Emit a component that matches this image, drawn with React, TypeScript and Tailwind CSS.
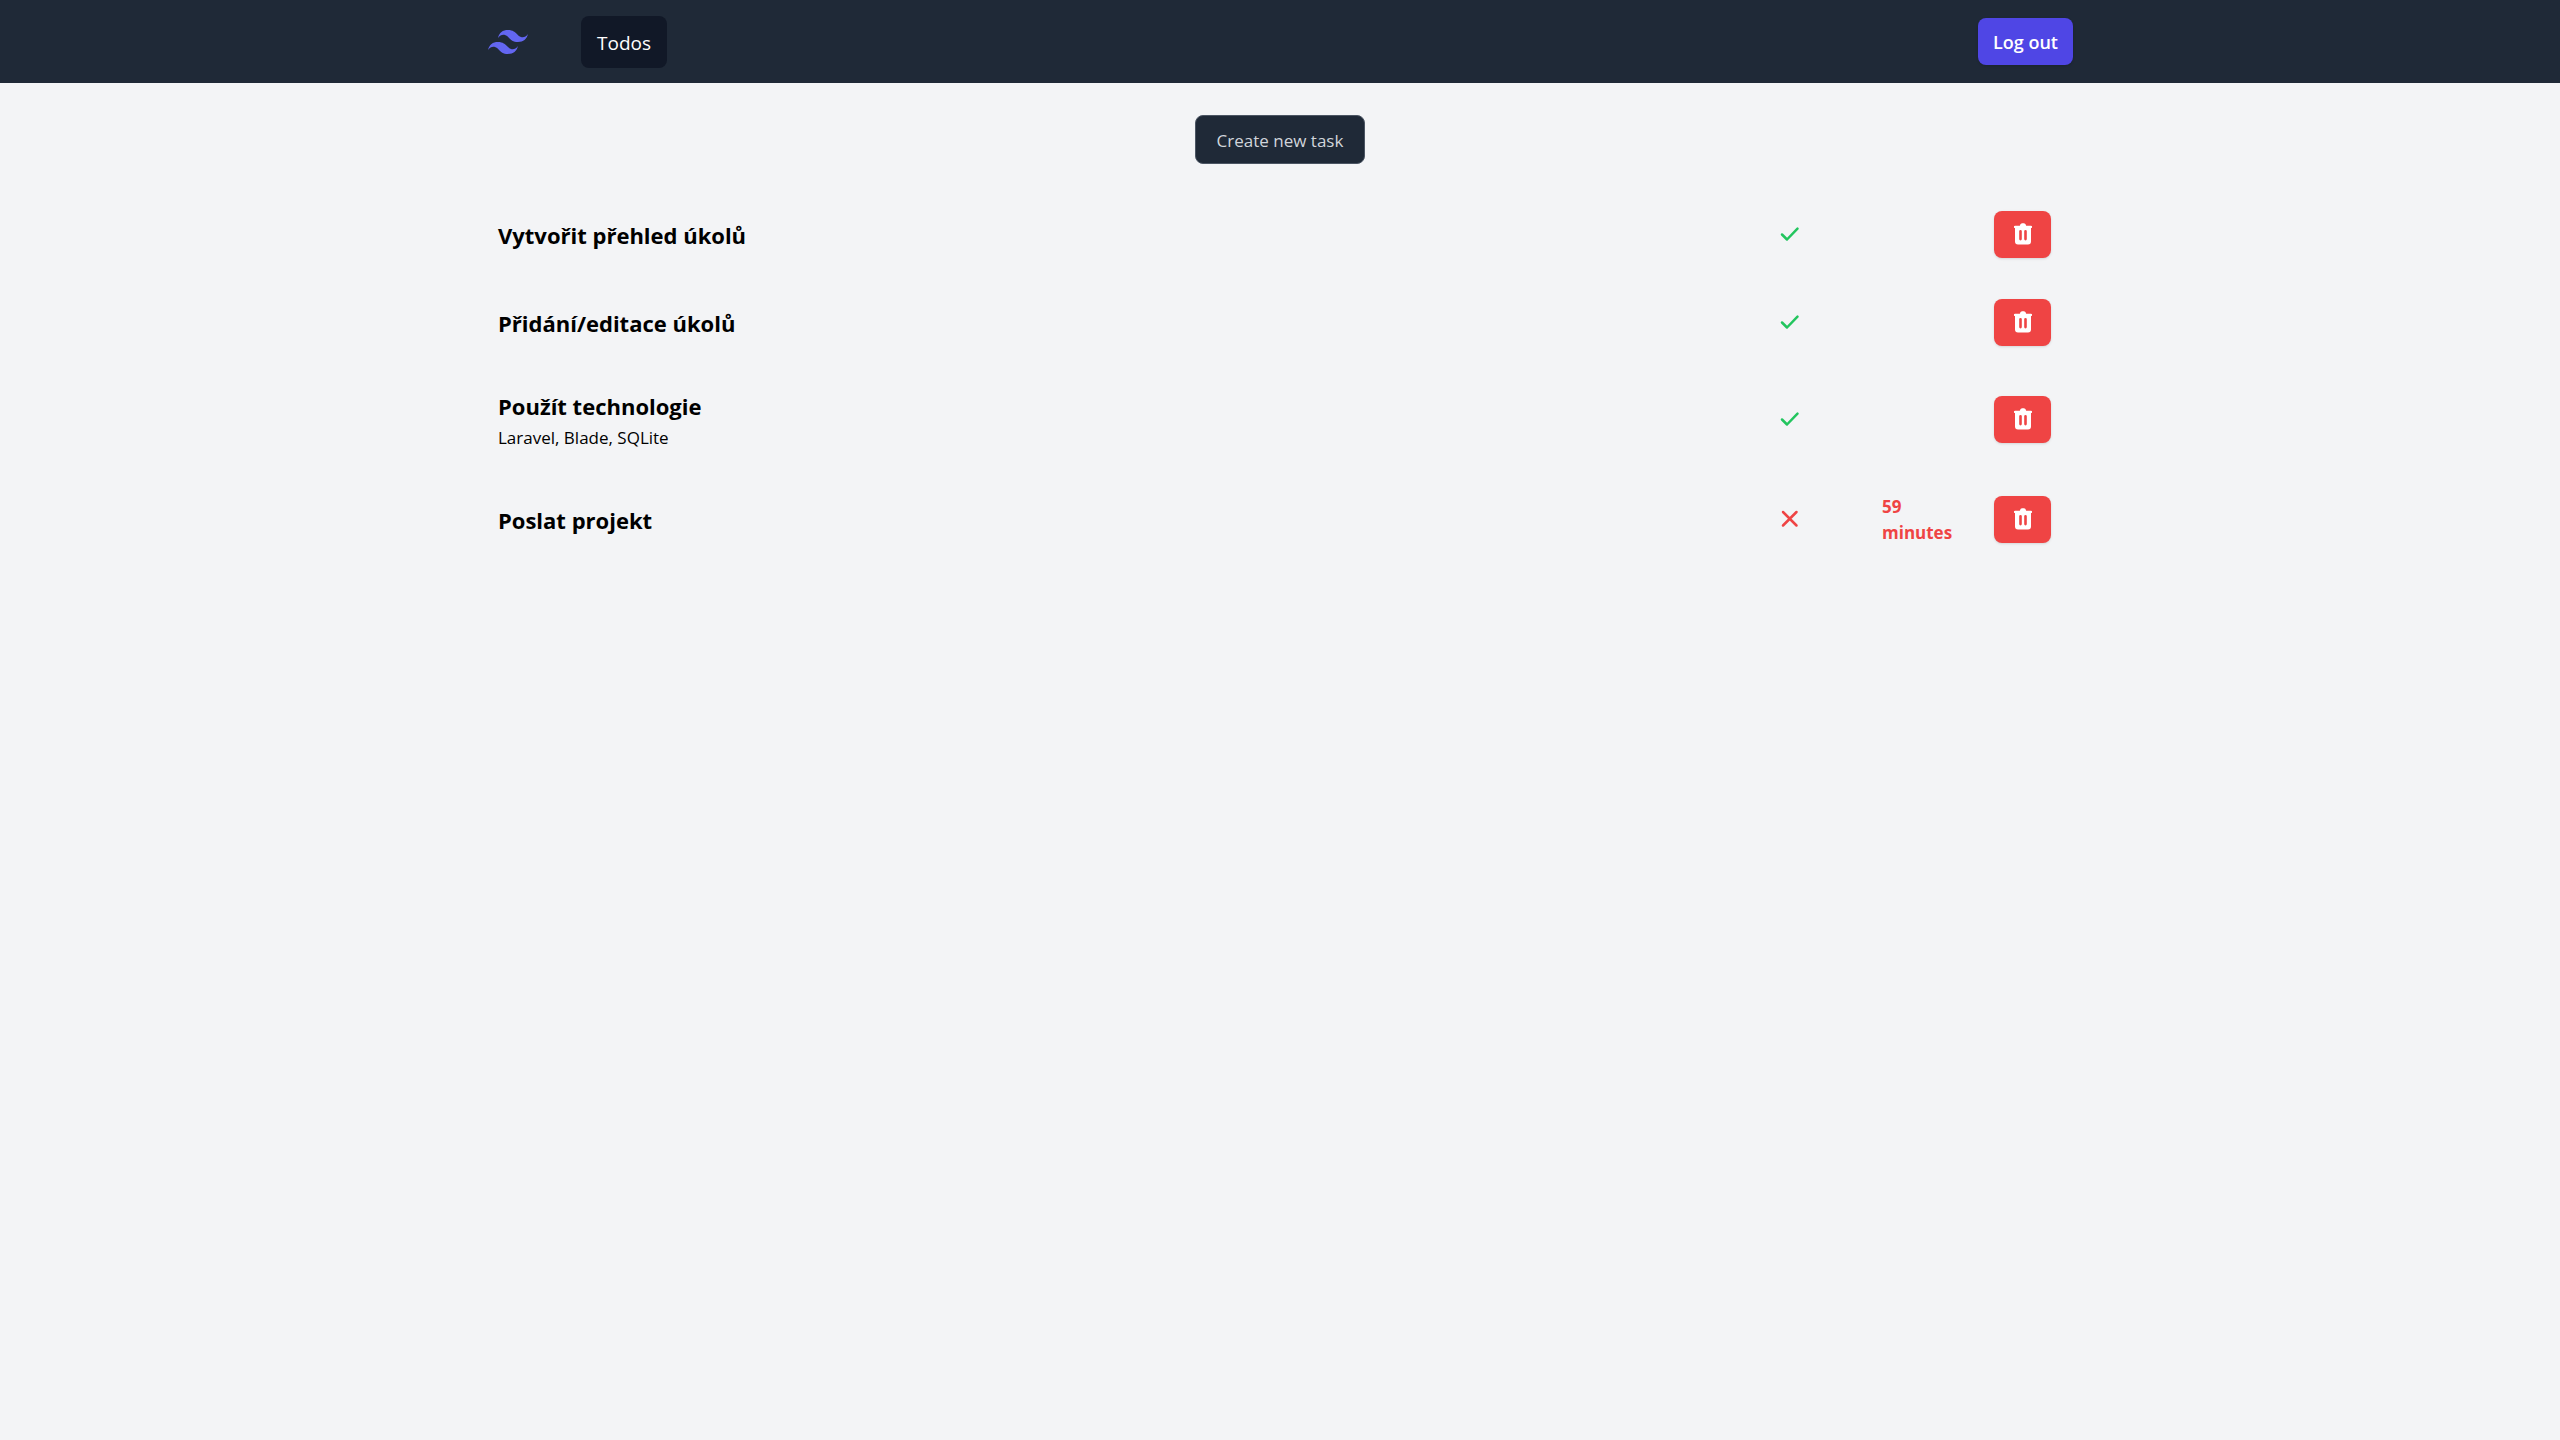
import React from "react";

type Task = { title: string; note?: string; done: boolean; due?: string };

const tasks: Task[] = [
  { title: "Vytvořit přehled úkolů", done: true },
  { title: "Přidání/editace úkolů", done: true },
  { title: "Použít technologie", note: "Laravel, Blade, SQLite", done: true },
  { title: "Poslat projekt", done: false, due: "59 minutes" },
];

function Logo() {
  return (
    <svg viewBox="0 0 54 33" className="mt-0.5 w-10 fill-[#6366f1]" aria-hidden="true">
      <path
        fillRule="evenodd"
        d="M27 0c-7.2 0-11.7 3.6-13.5 10.8 2.7-3.6 5.85-4.95 9.45-4.05 2.054.513 3.522 2.004 5.147 3.653C30.744 13.09 33.808 16.2 40.5 16.2c7.2 0 11.7-3.6 13.5-10.8-2.7 3.6-5.85 4.95-9.45 4.05-2.054-.513-3.522-2.004-5.147-3.653C36.756 3.11 33.692 0 27 0zM13.5 16.2C6.3 16.2 1.8 19.8 0 27c2.7-3.6 5.85-4.95 9.45-4.05 2.054.514 3.522 2.004 5.147 3.653C17.244 29.29 20.308 32.4 27 32.4c7.2 0 11.7-3.6 13.5-10.8-2.7 3.6-5.85 4.95-9.45 4.05-2.054-.513-3.522-2.004-5.147-3.653C23.256 19.31 20.192 16.2 13.5 16.2z"
      />
    </svg>
  );
}

function TrashIcon() {
  return (
    <svg viewBox="0 0 18 22" className="h-[22px] w-[18px] fill-white" aria-hidden="true">
      <path
        fillRule="evenodd"
        d="M5.800 2.800Q6.200 0.300 8 0.300h2Q11.800 0.300 12.200 2.800H17a1.100 1.100 0 0 1 0 2.200V18.500a3 3 0 0 1-3 3H4a3 3 0 0 1-3-3V5a1.100 1.100 0 0 1 0-2.200ZM5.200 8.300v7.800a1.300 1.300 0 0 0 2.600 0V8.300a1.300 1.300 0 0 0-2.600 0Zm5 0v7.800a1.300 1.300 0 0 0 2.600 0V8.300a1.300 1.300 0 0 0-2.600 0Z"
      />
    </svg>
  );
}

function StatusIcon({ done }: { done: boolean }) {
  return done ? (
    <svg viewBox="0 0 20 20" className="size-5 fill-none stroke-[#22c55e] stroke-[2.5px]" role="img" aria-label="Done">
      <path strokeLinecap="round" strokeLinejoin="round" d="M2 10.500l5 5L17.500 4.700" />
    </svg>
  ) : (
    <svg viewBox="0 0 20 20" className="size-5 fill-none stroke-[#ef4444] stroke-[2.5px]" role="img" aria-label="Not done">
      <path strokeLinecap="round" d="M3 3l13.500 13.500M16.500 3L3 16.500" />
    </svg>
  );
}

function TaskRow({ task }: { task: Task }) {
  return (
    <li className="flex min-h-[88px] items-center py-5">
      <div className={task.note ? "flex-1 pt-1" : "flex-1 pt-0.5"}>
        <h2 className="text-[22px] leading-8 font-bold">{task.title}</h2>
        {task.note && <p className="mt-0.5 text-[17px] leading-7">{task.note}</p>}
      </div>
      <div className="flex w-[102px]">
        <StatusIcon done={task.done} />
      </div>
      <div className="w-20 pt-0.5 text-[17px] leading-[26px] font-bold text-[#ef4444]">{task.due}</div>
      <button
        type="button"
        aria-label={`Delete ${task.title}`}
        className="ml-8 flex h-[47px] w-[57px] items-center justify-center rounded-lg bg-[#ef4444] shadow-sm"
      >
        <TrashIcon />
      </button>
    </li>
  );
}

export default function App() {
  return (
    <div className="min-h-screen bg-[#f3f4f6] font-['Open_Sans','Noto_Sans',sans-serif] text-black">
      <nav className="bg-[#1f2937]">
        <div className="mx-auto flex h-[83px] max-w-[1664px] items-center pr-[39px] pl-10">
          <Logo />
          <a
            href="#todos"
            className="ml-[53px] rounded-lg bg-[#111827] px-4 pt-[13px] pb-[11px] text-[19px] leading-7 text-white"
          >
            Todos
          </a>
          <button
            type="button"
            className="ml-auto h-[47px] rounded-lg bg-[#4f46e5] px-[15px] pt-0.5 text-[18px] font-semibold text-white shadow-sm"
          >
            Log out
          </button>
        </div>
      </nav>
      <main className="mx-auto max-w-[1664px] px-[50px] pt-8">
        <div className="flex justify-center">
          <button
            type="button"
            className="h-[49px] rounded-lg border border-[#4b5563] bg-[#1f2937] px-[21px] pt-0.5 text-[17px] text-[#d1d5db]"
          >
            Create new task
          </button>
        </div>
        <ul className="mt-[26px] pr-[11px]">
          {tasks.map((task) => (
            <TaskRow key={task.title} task={task} />
          ))}
        </ul>
      </main>
    </div>
  );
}
